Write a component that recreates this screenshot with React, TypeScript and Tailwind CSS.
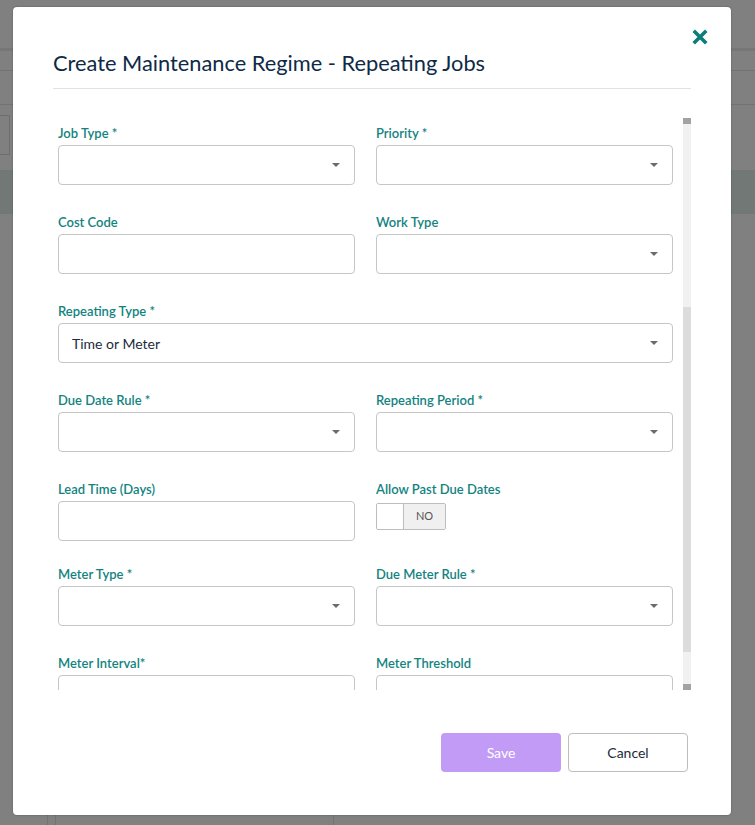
import type { ReactNode } from "react";

const font = { fontFamily: "Lato, 'Open Sans', sans-serif" };

function Caret() {
  return <span className="w-0 h-0 border-l-[4px] border-r-[4px] border-t-[4px] border-l-transparent border-r-transparent border-t-[#6b6b6b]" />;
}

function Field({ label, children, className = "" }: { label: string; children: ReactNode; className?: string }) {
  return (
    <div className={className}>
      <label className="block text-[13px] leading-[17px] font-semibold text-[#12837f] mb-[3px] mt-px">{label}</label>
      {children}
    </div>
  );
}

function SelectBox({ value }: { value?: string }) {
  return (
    <div className="h-10 rounded-[4px] border border-[#c6c6c6] bg-white flex items-center justify-between pl-[13px] pr-[14px]">
      <span className="text-[14px] text-[#1c2b3d]">{value}</span>
      <Caret />
    </div>
  );
}

function TextBox() {
  return <div className="h-10 rounded-[4px] border border-[#c6c6c6] bg-white" />;
}

function Toggle() {
  return (
    <div className="mt-[5px] flex h-[27px] w-[70px] rounded-[2px] border border-[#bdbdbd] overflow-hidden">
      <div className="w-[27px] bg-white border-r border-[#bdbdbd]" />
      <div className="flex-1 bg-[#f0f0f0] flex items-center justify-center text-[11px] text-[#555]">NO</div>
    </div>
  );
}

// dimmed page that sits behind the dialog
function Backdrop() {
  return (
    <div className="absolute inset-0 bg-[#808080]">
      <div className="h-[48px] bg-[#808080]" />
      <div className="h-[3px] bg-[#767676]" />
      <div className="h-[19px]" />
      <div className="h-px bg-[#737373]" />
      <div className="h-[33px]" />
      <div className="h-px bg-[#737373]" />
      <div className="h-[10px]" />
      <div className="h-[40px] w-[10px] border border-l-0 border-[#6e6e6e]" />
      <div className="h-[15px]" />
      <div className="h-[44px] bg-[#727876]" />
      <div className="absolute left-[47px] top-[815px] h-[10px] w-px bg-[#737373]" />
      <div className="absolute left-[55px] top-[815px] h-[10px] w-px bg-[#737373]" />
      <div className="absolute left-[333px] top-[815px] h-[10px] w-px bg-[#737373]" />
    </div>
  );
}

export default function App() {
  return (
    <div className="relative h-[825px] w-[755px] overflow-hidden" style={font}>
      <Backdrop />

      <div className="absolute left-[13px] top-[7px] w-[718px] h-[808px] bg-white rounded-[4px] shadow-[0_0_2px_rgba(0,0,0,0.35)] flex flex-col pl-10 pr-[40px]">
        <button className="absolute right-[23px] top-[22px] w-[16px] h-[16px] flex items-center justify-center">
          <svg width="16" height="16" viewBox="0 0 16 16">
            <path d="M3 3 L13 13 M13 3 L3 13" stroke="#0d7d7a" strokeWidth="3.6" strokeLinecap="square" />
          </svg>
        </button>

        <h2 className="mt-[42px] text-[21.8px] leading-[28px] text-[#0e2a47] pb-[11px] border-b border-[#e2e2e2]">
          Create Maintenance Regime - Repeating Jobs
        </h2>

        <div className="mt-[29px] h-[572px] flex">
          <div className="flex-1 overflow-hidden pl-[5px] pr-[10px] pt-[6px]">
            <div className="grid grid-cols-2 gap-x-[21px]">
              <Field label="Job Type *" className="mb-[28px]"><SelectBox /></Field>
              <Field label="Priority *" className="mb-[28px]"><SelectBox /></Field>

              <Field label="Cost Code" className="mb-[28px]"><TextBox /></Field>
              <Field label="Work Type" className="mb-[28px]"><SelectBox /></Field>

              <Field label="Repeating Type *" className="col-span-2 mb-[28px]"><SelectBox value="Time or Meter" /></Field>

              <Field label="Due Date Rule *" className="mb-[28px]"><SelectBox /></Field>
              <Field label="Repeating Period *" className="mb-[28px]"><SelectBox /></Field>

              <Field label="Lead Time (Days)" className="mb-[24px]"><TextBox /></Field>
              <Field label="Allow Past Due Dates" className="mb-[24px]"><Toggle /></Field>

              <Field label="Meter Type *" className="mb-[28px]"><SelectBox /></Field>
              <Field label="Due Meter Rule *" className="mb-[28px]"><SelectBox /></Field>

              <Field label="Meter Interval*"><TextBox /></Field>
              <Field label="Meter Threshold"><TextBox /></Field>
            </div>
          </div>

          {/* scrollbar */}
          <div className="w-2 flex flex-col bg-[#f1f1f1]">
            <div className="h-[6px] bg-[#a3a3a3]" />
            <div className="h-[183px]" />
            <div className="h-[345px] bg-[#dcdcdc]" />
            <div className="flex-1" />
            <div className="h-[6px] bg-[#a3a3a3]" />
          </div>
        </div>

        <div className="mt-[43px] flex justify-end gap-[7px] pr-[3px]">
          <button className="w-[120px] h-[39px] rounded-[4px] bg-[#c29bf6] text-white text-[14px]">Save</button>
          <button className="w-[120px] h-[39px] rounded-[4px] border border-[#bdbdbd] bg-white text-[#1b2a3c] text-[14px]">Cancel</button>
        </div>
      </div>
    </div>
  );
}
